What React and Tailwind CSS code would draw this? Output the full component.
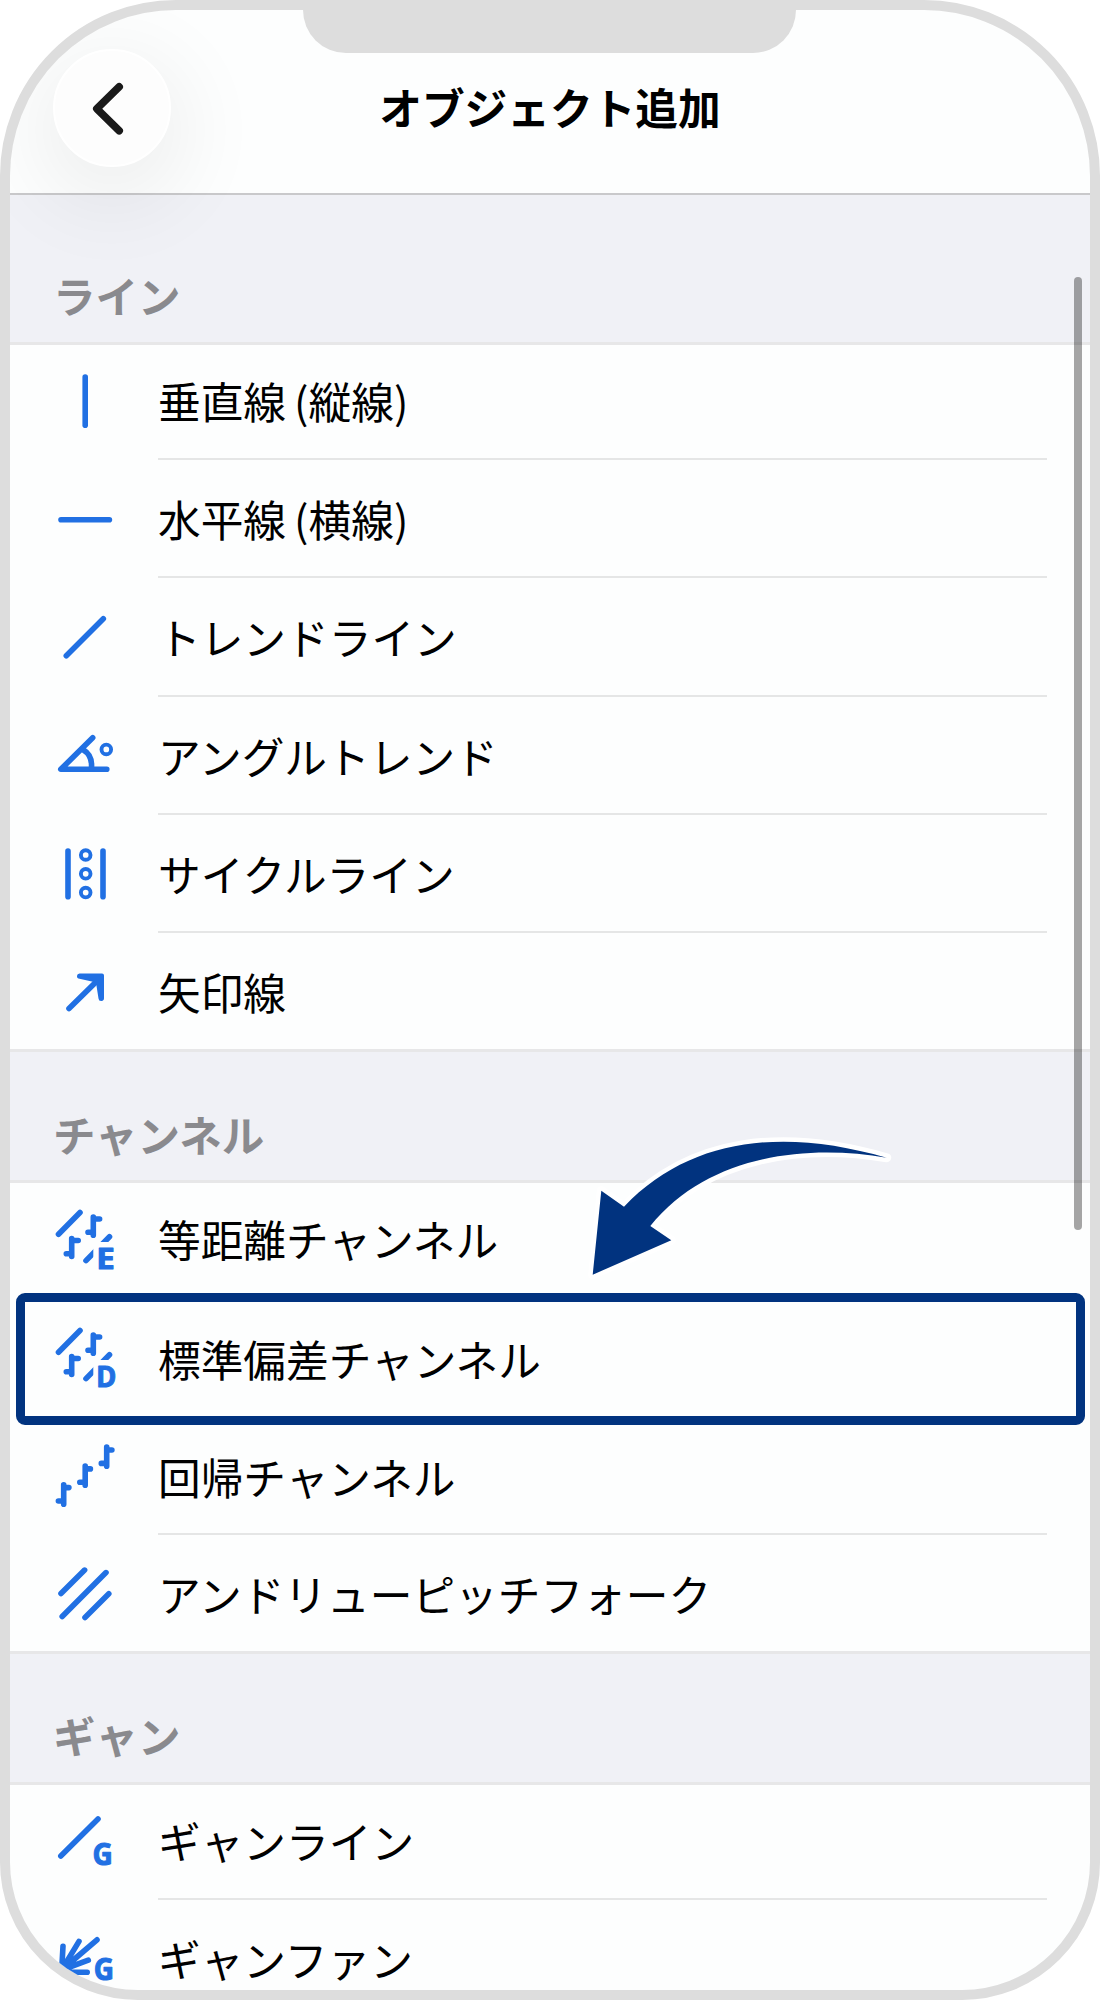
const BLUE = "#2170e3";

function Icon({ top, children }) {
  return (
    <svg
      className="block h-[65px] w-[65px] overflow-visible"
      viewBox={`53 ${top} 65 65`}
      fill="none"
      stroke={BLUE}
      strokeWidth="5.6"
      strokeLinecap="round"
      strokeLinejoin="round"
    >
      {children}
    </svg>
  );
}

function Letter({ x, y, width, size = 28.8, children }) {
  return (
    <text
      x={x}
      y={y}
      fill={BLUE}
      stroke={BLUE}
      strokeWidth="1"
      fontFamily='"Noto Sans", "Open Sans", sans-serif'
      fontWeight="700"
      fontSize={size}
      textLength={width}
      lengthAdjust="spacingAndGlyphs"
    >
      {children}
    </text>
  );
}

function ChannelIcon({ id, letter, width }) {
  return (
    <Icon top={1208}>
      <clipPath id={id}>
        <path d="M53 1200H120V1242H93.3V1275H53Z" />
      </clipPath>
      <path d="M80 1212.5 58.5 1234.3M93.3 1217V1235.3M93.3 1219H99.6M93.3 1232.3H88M71.7 1238.5V1256.5M71.7 1240.5H78.2M71.7 1253.8H66.3" />
      <path d="M109.5 1236.8 86 1260.6" clipPath={`url(#${id})`} />
      <Letter x={96.2} y={1268.7} width={width}>{letter}</Letter>
    </Icon>
  );
}

const lines = [
  {
    label: "垂直線 (縦線)",
    height: "h-[115px]",
    icon: <Icon top={370}><path d="M85.2 377V425.3" /></Icon>,
  },
  {
    label: "水平線 (横線)",
    height: "h-[118px]",
    icon: <Icon top={488}><path d="M61 519.7H109.4" /></Icon>,
  },
  {
    label: "トレンドライン",
    height: "h-[119px]",
    icon: <Icon top={606}><path d="M66.3 655.7 103.3 618.8" /></Icon>,
  },
  {
    label: "アングルトレンド",
    height: "h-[118px]",
    icon: (
      <Icon top={725}>
        <path d="M92.7 737.8 60.8 769.3H106.8" />
        <path d="M83.5 750C89.5 753.5 92 760 91.5 767.5" />
        <circle cx="106.3" cy="749.4" r="4.8" strokeWidth="3.9" />
      </Icon>
    ),
  },
  {
    label: "サイクルライン",
    height: "h-[118px]",
    icon: (
      <Icon top={843}>
        <path d="M68 851V896.7M103 851V896.7" />
        <g strokeWidth="3.9">
          <circle cx="85.7" cy="855" r="4.8" />
          <circle cx="85.7" cy="873.8" r="4.8" />
          <circle cx="85.7" cy="892.6" r="4.8" />
        </g>
      </Icon>
    ),
  },
  {
    label: "矢印線",
    height: "h-[116px]",
    icon: (
      <Icon top={961}>
        <path d="M69 1008.5 97 981" />
        <path
          d="M79.7 973.6H102Q104 973.6 104 975.6V998A2.7 2.7 0 0 1 98.5 998.4L96.3 984.5 94 982 79.5 978.8A2.6 2.6 0 0 1 79.7 973.6Z"
          fill={BLUE}
          stroke="none"
        />
      </Icon>
    ),
  },
];

const channels = [
  {
    label: "等距離チャンネル",
    height: "h-[117px]",
    icon: <ChannelIcon id="clip-e" letter="E" width={18.6} />,
  },
  {
    label: "標準偏差チャンネル",
    height: "h-[118px]",
    icon: <div className="-mt-[2px]"><ChannelIcon id="clip-d" letter="D" width={20} /></div>,
  },
  {
    label: "回帰チャンネル",
    height: "h-[117px]",
    icon: (
      <Icon top={1446}>
        <path d="M106.7 1447V1466.3M106.7 1450H111.9M106.7 1463.4H101.3" />
        <path d="M85.2 1466V1485.3M85.2 1468.9H90.4M85.2 1482.3H79.8" />
        <path d="M63.7 1484.8V1504.2M63.7 1487.6H68.9M63.7 1501H58.4" />
      </Icon>
    ),
  },
  {
    label: "アンドリューピッチフォーク",
    height: "h-[116px]",
    icon: (
      <Icon top={1563}>
        <path d="M61 1593.6 84.6 1570.1M62.2 1616.5 106 1572.6M85 1617.6 108.8 1593.8" />
      </Icon>
    ),
  },
];

const gann = [
  {
    label: "ギャンライン",
    height: "h-[115px]",
    icon: (
      <Icon top={1810}>
        <path d="M60.8 1856 98 1819" />
        <Letter x={92.6} y={1865.3} width={20.3} size={30}>G</Letter>
      </Icon>
    ),
  },
  {
    label: "ギャンファン",
    height: "h-[118px]",
    icon: (
      <Icon top={1928}>
        <path d="M61.7 1970 63 1946.2M61.7 1970 79 1941.4M61.7 1970 97 1939.8M61.7 1970 88.3 1960.2M61.7 1972.3H87.2" />
        <Letter x={93.8} y={1980} width={20.3} size={30}>G</Letter>
      </Icon>
    ),
  },
];

function Row({ item, first, last }) {
  return (
    <li className={`flex pr-[43px] pl-[43px] ${item.height}`}>
      <div className={`w-[105px] shrink-0 ${first ? "pt-[25px]" : "pt-[28px]"}`}>{item.icon}</div>
      <div className={`h-full flex-1 ${last ? "" : "border-b-2 border-[#e5e6e6]"}`}>
        <span
          className={`block text-[42.7px] whitespace-nowrap text-black [word-spacing:-1.5px] ${
            first ? "leading-[111px]" : "leading-[116px]"
          }`}
        >
          {item.label}
        </span>
      </div>
    </li>
  );
}

function Section({ title, headerClass, items, open }) {
  return (
    <section>
      <h2
        className={`flex items-end border-b-[3px] border-[#e7e7e8] bg-[#f0f1f6] pl-[43px] text-[42.5px] leading-[64px] font-bold text-[#8a8a8e] ${headerClass}`}
      >
        {title}
      </h2>
      <ul>
        {items.map((item, i) => (
          <Row key={item.label} item={item} first={i === 0} last={!open && i === items.length - 1} />
        ))}
      </ul>
    </section>
  );
}

export default function App() {
  return (
    <div className="relative h-[2000px] w-[1100px] bg-white font-['Noto_Sans_CJK_JP',sans-serif]">
      <div className="relative h-[2000px] overflow-hidden rounded-t-[176px] rounded-b-[138px] border-[10px] border-[#dddddd] bg-[#fdfefe]">
        <header className="relative z-10 flex h-[185px] items-center border-b-2 border-[#c9c9cb]">
          <button
            aria-label="戻る"
            className="mt-[12px] ml-[43px] flex size-[118px] items-center justify-center rounded-full border-2 border-white bg-[#fdfdfd] shadow-[0_22px_88px_14px_rgba(0,20,10,0.065)]"
          >
            <svg className="h-[60px] w-[60px]" viewBox="82 77.5 60 60" fill="none" stroke="#1a1a1a" strokeWidth="7.6" strokeLinecap="round" strokeLinejoin="round">
              <path d="M119.2 86.3 96.8 108.2 119.2 130.3" />
            </svg>
          </button>
          <h1 className="mt-[9px] mr-[161px] flex-1 text-center text-[42.7px] leading-[64px] font-bold text-black">
            オブジェクト追加
          </h1>
        </header>
        <main>
          <Section title="ライン" headerClass="h-[150px] pb-[15px]" items={lines} />
          <Section title="チャンネル" headerClass="h-[134px] border-t-[3px] pb-[14px]" items={channels} />
          <Section title="ギャン" headerClass="h-[134px] border-t-[3px] pb-[15px]" items={gann} open />
        </main>
        <div className="absolute top-0 left-[293px] z-20 h-[43px] w-[493px] rounded-b-[45px] bg-[#dddddd]" />
        <div className="absolute top-[267px] left-[1064px] h-[953px] w-[8px] rounded-full bg-black/35" />
      </div>
      <div className="absolute top-[1293px] left-[15.5px] h-[131.5px] w-[1069px] rounded-[9px] border-[9px] border-[#01337f] bg-transparent" />
      <svg className="absolute top-[1120px] left-[570px] h-[170px] w-[340px]" viewBox="570 1120 340 170">
        <path
          d="M886.7 1157.7C784 1128 691 1137 624 1206.7L601.3 1190.7 592.7 1274.7 671.3 1240.3 650.3 1226C708 1154.8 806 1144 886.7 1157.7Z"
          fill="#01337f"
          stroke="#fff"
          strokeWidth="9"
          strokeLinejoin="round"
          style={{ paintOrder: "stroke" }}
        />
      </svg>
    </div>
  );
}
